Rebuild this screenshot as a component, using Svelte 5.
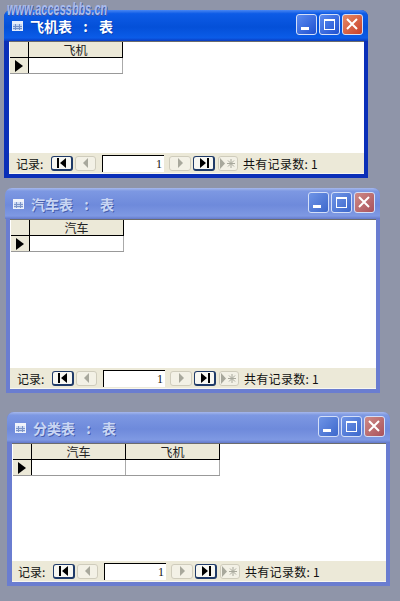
<script>
	const windows = [
		{ name: "飞机表", cols: ["飞机"], cls: "active w1" },
		{ name: "汽车表", cols: ["汽车"], cls: "w2" },
		{ name: "分类表", cols: ["汽车", "飞机"], cls: "w3" }
	]
</script>

<div class="page">
	<div class="watermark">www.accessbbs.cn</div>

	{#each windows as win}
		<section class="window {win.cls}">
			<header class="title">
				<svg class="table-icon" width="11" height="10" viewBox="0 0 11 10">
					<rect x="0" y="0" width="11" height="10" fill="#fff" />
					<rect x="1" y="3" width="9" height="6" fill="#d6e2f6" />
					<path d="M1 5.500h9M1 7.500h9M3.500 3v6M7.500 3v6" stroke="#7f97c6" stroke-width="1" fill="none" />
				</svg>
				<span class="caption">{win.name} : 表</span>
				<div class="controls">
					<button class="ctl">
						<svg width="21" height="21" viewBox="0 0 21 21"><rect x="5" y="13" width="8" height="3" fill="#fff" /></svg>
					</button>
					<button class="ctl">
						<svg width="21" height="21" viewBox="0 0 21 21"><rect x="5.500" y="5.500" width="10" height="10" fill="none" stroke="#fff" /><rect x="5" y="5" width="11" height="2" fill="#fff" /></svg>
					</button>
					<button class="ctl close">
						<svg width="21" height="21" viewBox="0 0 21 21"><path d="M5 5l10 10M15 5L5 15" stroke="#fff" stroke-width="2" /></svg>
					</button>
				</div>
			</header>

			<div class="client">
				<div class="sheet">
					<div class="grid">
						<div class="row head">
							<div class="selector"></div>
							{#each win.cols as col}
								<div class="cell">{col}</div>
							{/each}
						</div>
						<div class="row">
							<div class="selector">
								<svg width="8" height="12" viewBox="0 0 8 12"><path d="M0 0l8 6-8 6z" fill="#000" /></svg>
							</div>
							{#each win.cols as col}
								<div class="cell"></div>
							{/each}
						</div>
					</div>
				</div>

				<footer class="status">
					<span class="label">记录:</span>
					<button class="nav on first">
						<svg width="12" height="10" viewBox="0 0 12 10"><path d="M1 0h2v10H1zM10 0v10L4 5z" fill="#000" /></svg>
					</button>
					<button class="nav prev">
						<svg width="8" height="10" viewBox="0 0 8 10"><path d="M6 0v10L1 5z" fill="#a8a89c" /></svg>
					</button>
					<div class="current">1</div>
					<button class="nav next">
						<svg width="8" height="10" viewBox="0 0 8 10"><path d="M2 0v10l5-5z" fill="#a8a89c" /></svg>
					</button>
					<button class="nav on last">
						<svg width="12" height="10" viewBox="0 0 12 10"><path d="M2 0v10l6-5zM9 0h2v10H9z" fill="#000" /></svg>
					</button>
					<button class="nav new">
						<svg width="18" height="11" viewBox="0 0 18 11"><path d="M1 0v11l5-5.500z" fill="#a8a89c" /><path d="M12 1v9M8 5.500h8M9 2.500l6 6M15 2.500l-6 6" stroke="#a8a89c" fill="none" /></svg>
					</button>
					<span class="count">共有记录数: 1</span>
				</footer>
			</div>
		</section>
	{/each}
</div>

<style>
	:global(body) {
		margin: 0;
		background: #8f95a9;
	}

	.page {
		position: relative;
		width: 400px;
		height: 601px;
		padding-top: 10px;
		box-sizing: border-box;
		overflow: hidden;
		font-family: "Noto Sans CJK SC", "Liberation Sans", sans-serif;
	}

	.watermark {
		position: absolute;
		z-index: 1;
		left: 7px;
		top: -1px;
		font-family: "Liberation Sans", sans-serif;
		font-size: 18px;
		line-height: 21px;
		font-weight: bold;
		font-style: italic;
		color: #a9bcec;
		text-shadow: 1px 1px 0 #3a55a8;
		transform: scaleX(0.61);
		transform-origin: left;
		white-space: nowrap;
	}

	.window {
		box-sizing: border-box;
		display: flex;
		flex-direction: column;
		border-radius: 7px 7px 0 0;
		padding: 0 4px 4px;
		background: #6a7dd0;
	}

	.window.active {
		background: #0a2fb8;
	}

	.w1 {
		width: 364px;
		height: 168px;
		margin-left: 4px;
		padding-left: 5px;
	}

	.w2 {
		width: 374px;
		height: 205px;
		margin-top: 10px;
		margin-left: 6px;
	}

	.w3 {
		width: 383px;
		height: 174px;
		margin-top: 19px;
		margin-left: 7px;
		padding-left: 5px;
	}

	.w3 .status {
		padding-left: 6px;
	}

	.title {
		flex: none;
		height: 31px;
		margin: 0 -4px 0 -5px;
		padding: 0 5px;
		display: flex;
		align-items: center;
		border-radius: 7px 7px 0 0;
		color: #c9d6f4;
		background: linear-gradient(#a6b8ec 0, #7d98e2 10%, #6e8adb 55%, #7f99e3 90%, #6379ca);
	}

	.active .title {
		color: #fff;
		background: linear-gradient(#4a86f2 0, #0d5be6 12%, #0450d8 55%, #0b5ce8 90%, #0a3cc0);
	}

	.table-icon {
		margin-left: 3px;
		margin-top: 1px;
		opacity: 0.9;
	}

	.caption {
		margin-left: 7px;
		font-size: 14px;
		line-height: 18px;
		font-weight: bold;
		word-spacing: 8px;
		white-space: pre;
		text-shadow: 1px 1px 0 rgba(10, 30, 110, 0.45);
	}

	.controls {
		margin-left: auto;
		margin-top: -3px;
		display: flex;
		gap: 2px;
	}

	.ctl {
		width: 21px;
		height: 21px;
		padding: 0;
		display: block;
		border: 1px solid #d4dff8;
		border-radius: 3px;
		background: linear-gradient(135deg, #6f94e6, #3d68cc);
	}

	.ctl svg {
		display: block;
		margin: -1px;
	}

	.ctl.close {
		background: linear-gradient(135deg, #cf8a86, #a9525c);
	}

	.active .ctl {
		background: linear-gradient(135deg, #5c8cf0, #1f50d0);
	}

	.active .ctl.close {
		background: linear-gradient(135deg, #e58a66, #c9402a);
	}

	.client {
		flex: 1;
		min-height: 0;
		display: flex;
		flex-direction: column;
		background: #fff;
		border-top: 1px solid #6c6c6c;
	}

	.sheet {
		flex: 1;
		min-height: 0;
	}

	.grid {
		display: inline-block;
		margin-left: 1px;
		border-bottom: 1px solid #999;
		vertical-align: top;
	}

	.row {
		display: flex;
		height: 15px;
	}

	.row.head {
		height: 16px;
		border-bottom: 1px solid #000;
		background: #ece9d8;
		box-sizing: border-box;
	}

	.selector {
		box-sizing: border-box;
		width: 19px;
		display: flex;
		align-items: center;
		justify-content: center;
		background: #ece9d8;
		border-right: 1px solid #000;
	}

	.cell {
		box-sizing: border-box;
		width: 94px;
		font-size: 12px;
		line-height: 15px;
		text-align: center;
		color: #222;
		border-right: 1px solid #aaa;
	}

	.head .cell {
		border-right-color: #000;
	}

	.status {
		flex: none;
		height: 21px;
		box-sizing: border-box;
		display: flex;
		align-items: center;
		padding: 0 0 0 7px;
		background: #ece9d8;
		border-bottom: 1px solid #f8f7f0;
		font-size: 12px;
		color: #111;
		white-space: nowrap;
	}

	.label {
		width: 35px;
	}

	.nav {
		box-sizing: border-box;
		width: 22px;
		height: 15px;
		padding: 0;
		display: flex;
		align-items: center;
		justify-content: center;
		border: 1px solid #cfccbc;
		border-radius: 3px;
		background: #f3f1e6;
	}

	.nav.on {
		border-color: #1f3a68;
		border-right-width: 2px;
		border-bottom-width: 2px;
		background: #f7f7f2;
	}

	.prev {
		margin-left: 2px;
		width: 21px;
	}

	.next {
		margin-left: 5px;
	}

	.last {
		margin-left: 2px;
	}

	.new {
		margin-left: 3px;
		width: 20px;
	}

	.current {
		box-sizing: border-box;
		width: 62px;
		height: 17px;
		margin-left: 6px;
		margin-top: 1px;
		padding-right: 2px;
		text-align: right;
		font-family: "Liberation Serif", serif;
		font-size: 12px;
		line-height: 17px;
		background: #fff;
		border-top: 1px solid #000;
		border-left: 1px solid #000;
	}

	.count {
		margin-left: 5px;
		letter-spacing: 0.3px;
	}
</style>
